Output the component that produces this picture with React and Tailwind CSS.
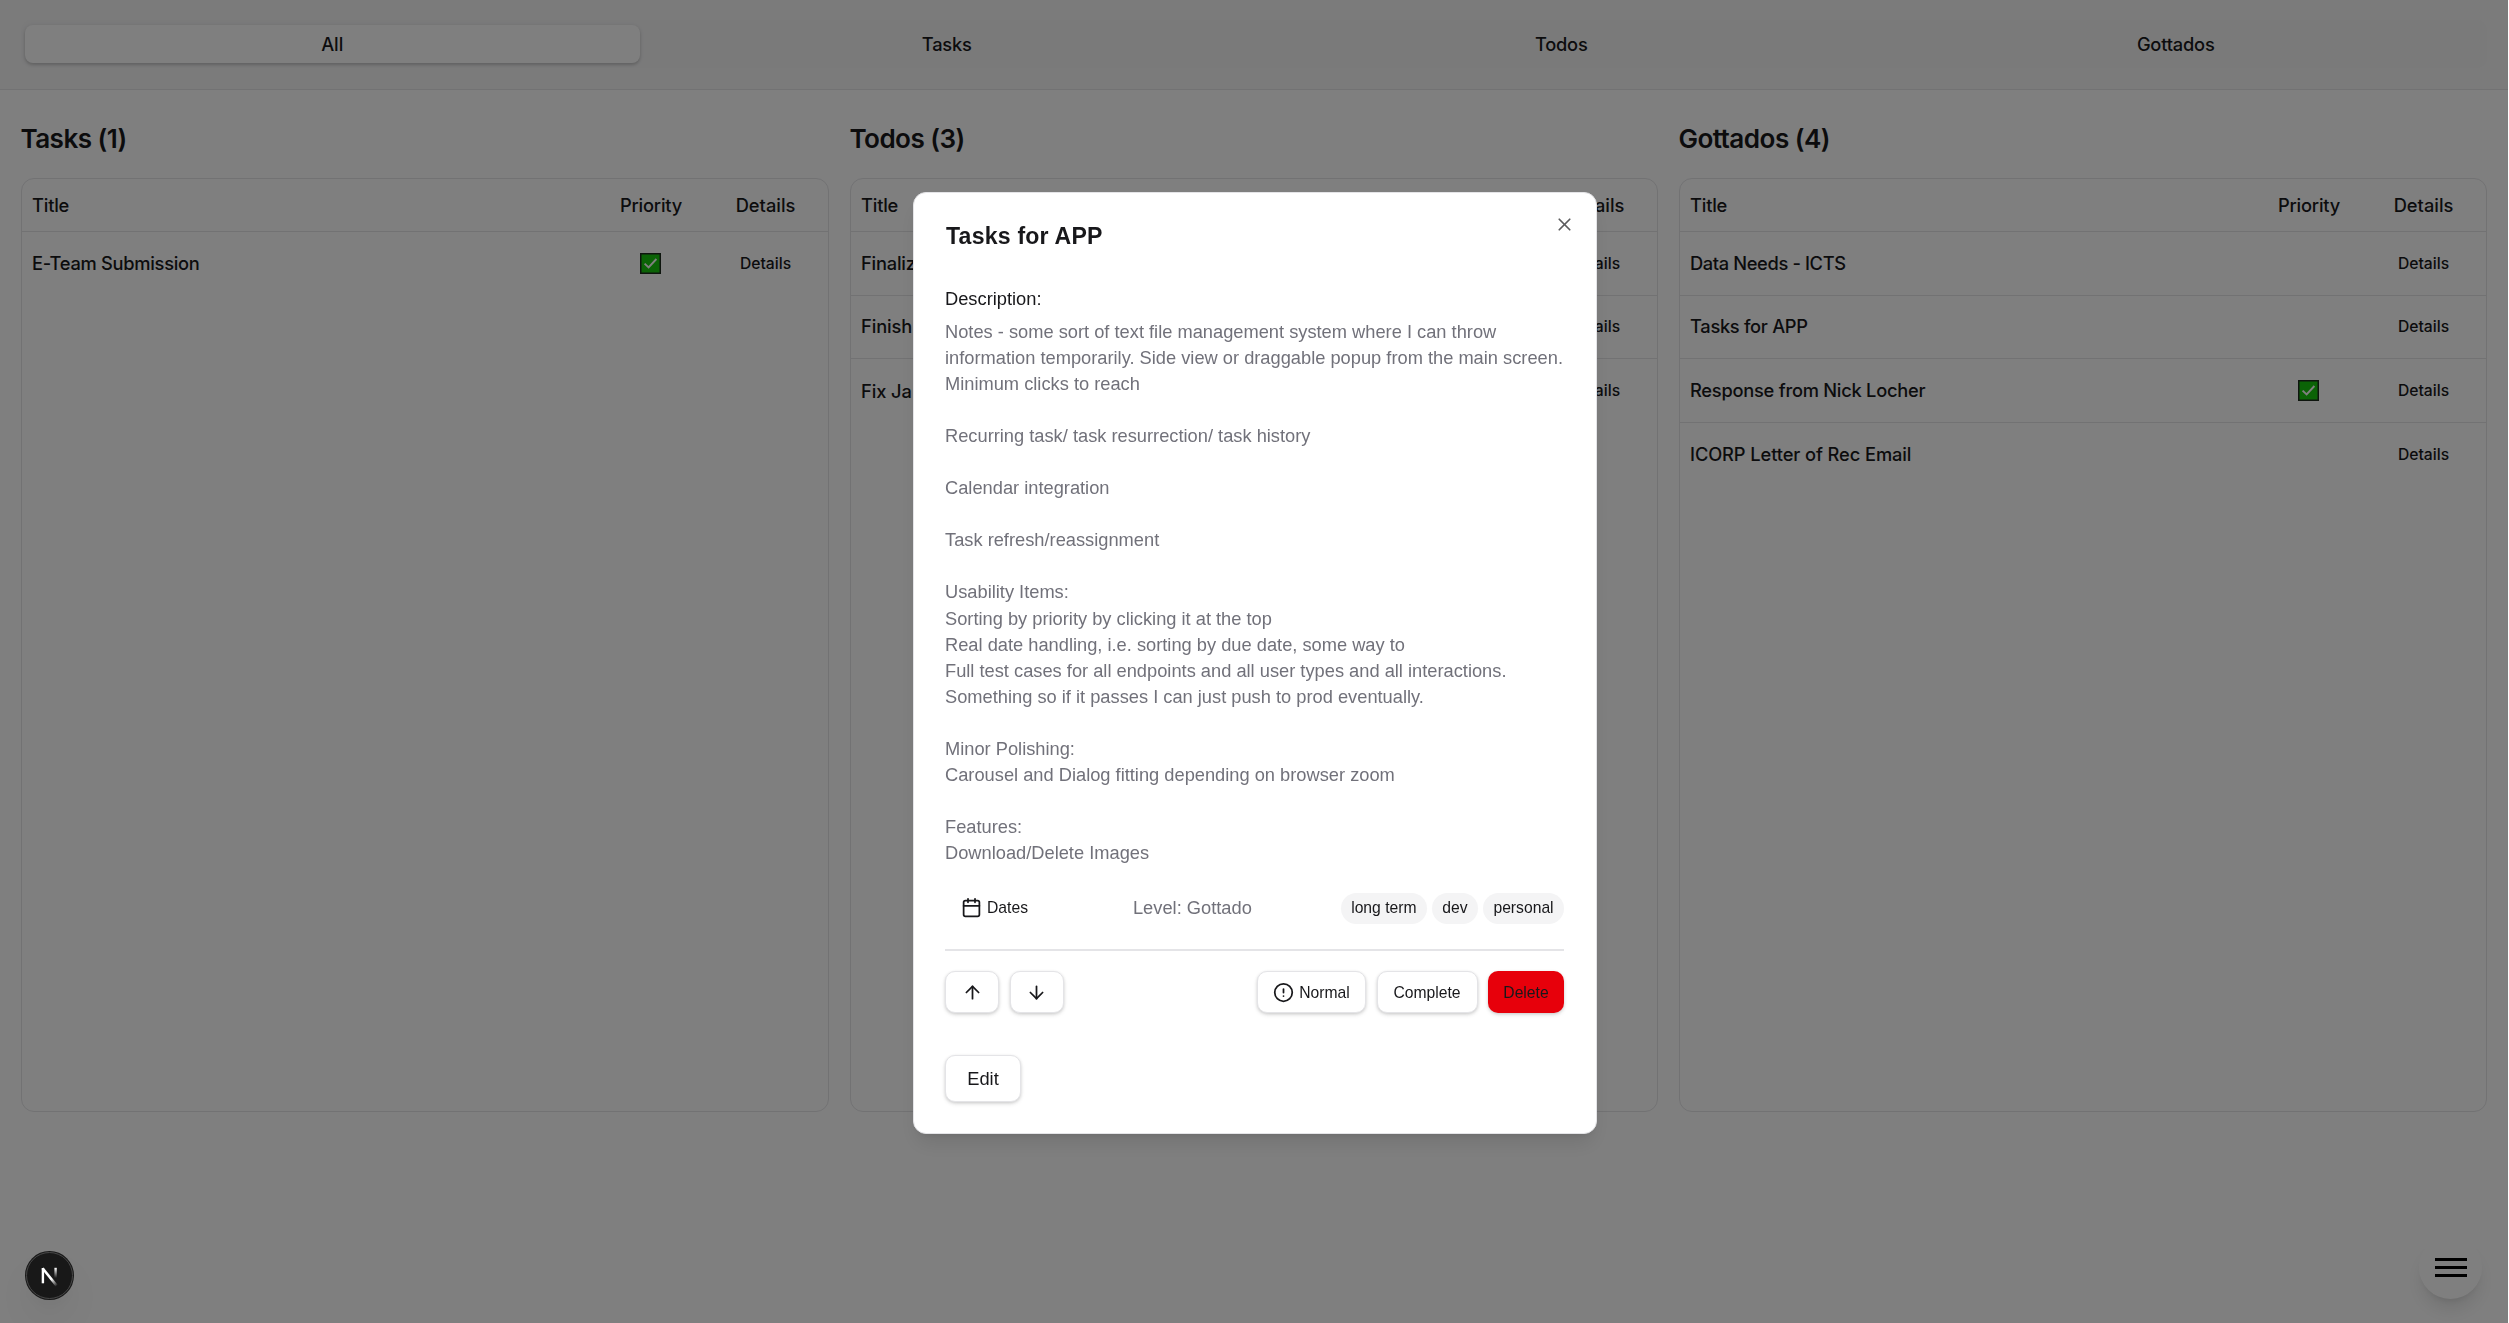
import { X, Calendar, ArrowUp, ArrowDown, CircleAlert } from "lucide-react";

const lists = [
  { name: "Tasks", rows: [["E-Team Submission", true, "tracking-[-0.28px]"]] },
  {
    name: "Todos",
    rows: [
      ["Finaliz", false, "tracking-[-0.2px]"],
      ["Finish", false, "tracking-[-0.1px]"],
      ["Fix Ja", false, "tracking-[-0.1px]"],
    ],
  },
  {
    name: "Gottados",
    rows: [
      ["Data Needs - ICTS", false, "tracking-[-0.37px]"],
      ["Tasks for APP", false, "tracking-[-0.3px]"],
      ["Response from Nick Locher", true, "tracking-[-0.25px]"],
      ["ICORP Letter of Rec Email", false, "tracking-[-0.1px]"],
    ],
  },
];

const notes = `Notes - some sort of text file management system where I can throw information temporarily. Side view or draggable popup from the main screen. Minimum clicks to reach

Recurring task/ task resurrection/ task history

Calendar integration

Task refresh/reassignment

Usability Items:`;

const items = `Sorting by priority by clicking it at the top
Real date handling, i.e. sorting by due date, some way to
Full test cases for all endpoints and all user types and all interactions. Something so if it passes I can just push to prod eventually.

Minor Polishing:
Carousel and Dialog fitting depending on browser zoom

Features:
Download/Delete Images`;

function CheckMark() {
  return (
    <svg className="-mt-[1px] h-[21px] w-[21px]" viewBox="0 0 21 21">
      <rect x="0.75" y="0.75" width="19.5" height="19.5" fill="#16c60c" stroke="#1c2a1c" strokeWidth="1.5" />
      <path d="M4.6 10.6 8.6 14.4 16.4 6" fill="none" stroke="#fff" strokeWidth="1.9" />
    </svg>
  );
}

function TabBar() {
  return (
    <header className="h-[90px] border-b border-[#e4e4e7] bg-[#f6f6f6] px-[21px] pt-[20px]">
      <nav className="grid h-[48px] grid-cols-4 rounded-[10px] bg-[#f4f4f5] px-[4px] py-[5px]">
        {["All", "Tasks", "Todos", "Gottados"].map((tab, i) => (
          <button
            key={tab}
            className={
              i === 0
                ? "rounded-[8px] bg-white pt-[1px] text-[18.3px] font-medium shadow-[0_1px_4px_rgba(0,0,0,0.12),0_2px_3px_rgba(0,0,0,0.12)]"
                : "rounded-[8px] pt-[1px] text-[18.3px] font-medium tracking-[-0.2px]"
            }
          >
            {tab}
          </button>
        ))}
      </nav>
    </header>
  );
}

function List({ name, rows }) {
  return (
    <section className="min-w-0">
      <h2 className="-ml-[0.6px] h-[36px] text-[26.1px] leading-[36px] font-semibold tracking-[-0.55px]">
        {name} ({rows.length})
      </h2>
      <div className="mt-[21px] h-[934px] rounded-[13px] border border-[#e4e4e7]">
        <div className="grid h-[53px] grid-cols-[1fr_105px_125px] items-center border-b border-[#e4e4e7] pt-[1px] text-[18.3px] font-medium">
          <span className="pl-[10px] tracking-[-0.2px]">Title</span>
          <span className="pl-[1px] text-center tracking-[-0.2px]">Priority</span>
          <span className="text-center">Details</span>
        </div>
        {rows.map(([title, priority, tracking]) => (
          <div
            key={title}
            className="grid h-[63.7px] grid-cols-[1fr_105px_125px] items-center border-b border-[#e4e4e7] last:border-b-0"
          >
            <span className={"pl-[10px] text-[18.3px] font-medium " + tracking}>{title}</span>
            <span className="flex justify-center">{priority && <CheckMark />}</span>
            <button className="text-[15.7px] font-medium">Details</button>
          </div>
        ))}
      </div>
    </section>
  );
}

function SmallButton({ children, className }) {
  return (
    <button
      className={
        "flex h-[42px] items-center justify-center gap-[5px] rounded-[10px] text-[15.7px] shadow-[0_1px_3px_rgba(0,0,0,0.12),0_2px_4px_rgba(0,0,0,0.1)] " +
        className
      }
    >
      {children}
    </button>
  );
}

function TaskDialog() {
  const icon = "h-[21px] w-[21px]";
  return (
    <div
      role="dialog"
      className="relative h-[942px] w-[684px] rounded-[13px] border border-[#e4e4e7] bg-white pt-[31px] pr-[32px] pl-[31px] font-['Liberation_Sans',Arial,sans-serif] shadow-[0_13px_20px_-4px_rgba(0,0,0,0.1),0_5px_8px_-5px_rgba(0,0,0,0.1)]"
    >
      <button className="absolute top-[21px] right-[21px] opacity-70">
        <X className={icon} />
      </button>
      <h1 className="h-[24px] pl-[1px] text-[23.1px] leading-[24px] font-bold tracking-[0.2px]">Tasks for APP</h1>
      <h3 className="mt-[38px] h-[26px] text-[18.3px] leading-[26px] whitespace-nowrap">Description:</h3>
      <div className="mt-[7px] h-[568px] text-[18.28px] leading-[26px] whitespace-pre-line text-[#71717a]">
        <p>{notes}</p>
        <p className="mt-[1px]">{items}</p>
      </div>
      <div className="flex h-[42px] items-center justify-between">
        <button className="flex w-[92px] items-center gap-[5px] pl-[16px] text-[15.7px]">
          <Calendar className={icon} />
          Dates
        </button>
        <span className="pl-[7px] text-[18.3px] text-[#71717a]">Level: Gottado</span>
        <div className="flex gap-[5px] text-[15.7px]">
          {["long term", "dev", "personal"].map((tag) => (
            <span key={tag} className="flex h-[31px] items-center rounded-full bg-[#f4f4f5] px-[10.4px]">
              {tag}
            </span>
          ))}
        </div>
      </div>
      <hr className="mt-[20px] border-t-2 border-[#e4e4e7]" />
      <div className="mt-[20px] flex gap-[10.5px]">
        <SmallButton className="w-[54px] border border-[#e4e4e7] bg-white">
          <ArrowUp className={icon} />
        </SmallButton>
        <SmallButton className="w-[54px] border border-[#e4e4e7] bg-white">
          <ArrowDown className={icon} />
        </SmallButton>
        <SmallButton className="ml-auto w-[109px] border border-[#e4e4e7] bg-white">
          <CircleAlert className={icon} />
          <span className="pt-[1px]">Normal</span>
        </SmallButton>
        <SmallButton className="w-[101px] border border-[#e4e4e7] bg-white pt-[1px]">Complete</SmallButton>
        <SmallButton className="w-[76px] bg-[#e7000b] pt-[1px]">Delete</SmallButton>
      </div>
      <button className="mt-[42px] h-[47px] w-[76px] rounded-[10px] border border-[#e4e4e7] bg-white text-[18.3px] shadow-[0_1px_3px_rgba(0,0,0,0.12),0_2px_4px_rgba(0,0,0,0.1)]">
        Edit
      </button>
    </div>
  );
}

function DevBadge() {
  return (
    <div className="fixed bottom-[23px] left-[25px] z-20 h-[49px] w-[49px] rounded-full shadow-[0_21px_42px_-10px_rgba(0,0,0,0.12),0_10px_21px_-8px_rgba(0,0,0,0.06)]">
      <svg className="h-[49px] w-[49px]" viewBox="0 0 49 49" fill="none">
        <defs>
          <linearGradient id="diag" x1="22" y1="24" x2="32" y2="35" gradientUnits="userSpaceOnUse">
            <stop offset="0.4" stopColor="#fff" />
            <stop offset="1" stopColor="#fff" stopOpacity="0" />
          </linearGradient>
          <linearGradient id="stem" x1="30" y1="17" x2="30" y2="27" gradientUnits="userSpaceOnUse">
            <stop stopColor="#fff" />
            <stop offset="1" stopColor="#fff" stopOpacity="0" />
          </linearGradient>
        </defs>
        <circle cx="24.5" cy="24.5" r="24.5" fill="#181818" />
        <circle cx="24.5" cy="24.5" r="23" stroke="#484848" />
        <path d="M17.9 32.3V17" stroke="#fff" strokeWidth="2.4" />
        <path d="M17.6 17.2 31.6 34.6" stroke="url(#diag)" strokeWidth="2.6" />
        <path d="M30.6 16.8v10.4" stroke="url(#stem)" strokeWidth="2.4" />
      </svg>
    </div>
  );
}

export default function App() {
  return (
    <div className="bg-white">
      <div className="relative h-[1323px] w-[2508px] overflow-hidden bg-white font-[Inter,sans-serif] text-[#18181b]">
        <TabBar />
        <main className="grid grid-cols-3 gap-[21px] px-[21px] pt-[31px]">
          {lists.map((list) => (
            <List key={list.name} {...list} />
          ))}
        </main>
        <button className="fixed right-[27px] bottom-[24px] flex h-[63px] w-[63px] flex-col items-center justify-center gap-[5px] rounded-full bg-white shadow-[0_13px_20px_-4px_rgba(0,0,0,0.12),0_5px_8px_-5px_rgba(0,0,0,0.12)]">
          <span className="h-[3px] w-[32px] bg-black" />
          <span className="h-[3px] w-[32px] bg-black" />
          <span className="h-[3px] w-[32px] bg-black" />
        </button>
        <div className="fixed inset-y-0 left-0 flex w-[2508px] items-start justify-center bg-black/50 pt-[192px] pl-[2px]">
          <TaskDialog />
        </div>
        <DevBadge />
      </div>
    </div>
  );
}
